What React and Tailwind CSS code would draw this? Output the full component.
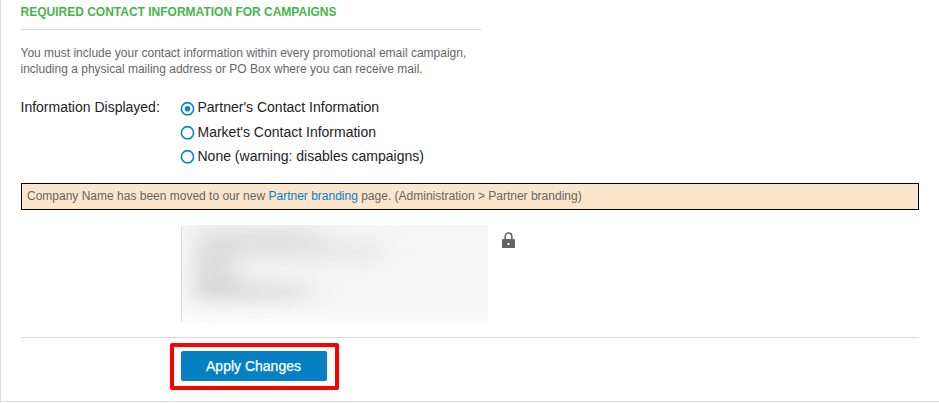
import React from "react";

const options = [
  { label: "Partner's Contact Information", checked: true, row: "h-[25px]", dot: "mt-[3px]" },
  { label: "Market's Contact Information", checked: false, row: "h-[24px]", dot: "mt-[2px]" },
  { label: "None (warning: disables campaigns)", checked: false, row: "h-[24px]", dot: "mt-[2px]" },
];

function Radio({ checked, offset }) {
  return (
    <svg className={`h-[14px] w-[14px] shrink-0 overflow-visible ${offset}`} viewBox="0 0 14 14" fill="none">
      <circle cx="6.5" cy="6.8" r="6.1" stroke="#0d86c8" strokeWidth="1.7" />
      {checked && <circle cx="6.5" cy="6.8" r="2.8" fill="#0d86c8" />}
    </svg>
  );
}

function LockIcon() {
  return (
    <svg className="mt-[7px] ml-[14px] h-[16px] w-[13px]" viewBox="0 0 13 16" fill="none">
      <path d="M3.2 8V4.3a3.3 3.3 0 0 1 6.6 0V8" stroke="#636363" strokeWidth="1.6" />
      <rect x="0" y="7" width="13" height="9" rx="0.8" fill="#636363" />
      <rect x="5.5" y="11" width="2" height="2" fill="#fff" />
    </svg>
  );
}

export default function App() {
  return (
    <div className="h-[403px] w-[939px] overflow-hidden bg-white font-['Liberation_Sans',Arial,sans-serif]">
      <main className="h-[402px] border-b border-l border-[#d9d9d9] pr-[20px] pl-[20px]">
        <header className="h-[30px] w-[460px] border-b border-[#d9d9d9] pt-[4px]">
          <h1 className="-ml-[0.5px] text-[12px] leading-[16px] font-bold whitespace-nowrap text-[#46b549]">REQUIRED CONTACT INFORMATION FOR CAMPAIGNS</h1>
        </header>
        <p className="mt-[15px] -ml-[0.5px] text-[12px] leading-[16px] whitespace-nowrap text-[#666]">
          You must include your contact information within every promotional email campaign,
          <br />
          including a physical mailing address or PO Box where you can receive mail.
        </p>
        <section className="mt-[22px] -ml-[0.5px] flex h-[84px] text-[14px] leading-[16px] text-[#222]">
          <div className="w-[160px] whitespace-nowrap">Information Displayed:</div>
          <div>
            {options.map((o) => (
              <label key={o.label} className={`flex items-start gap-[3px] whitespace-nowrap ${o.row}`}>
                <Radio checked={o.checked} offset={o.dot} />
                <span>{o.label}</span>
              </label>
            ))}
          </div>
        </section>
        <div className="h-[27px] border border-black bg-[#fce5cd] pt-[4px] pl-[5px] text-[12px] leading-[16px] whitespace-nowrap text-[#666]">
          Company Name has been moved to our new <a className="text-[#0680c3]">Partner branding</a> page. (Administration &gt; Partner branding)
        </div>
        <section className="mt-[15px] flex h-[98px] pl-[160px]">
          <div className="h-[98px] w-[307px] overflow-hidden rounded-l-[3px] border-l border-[#dadada] bg-[#f6f6f6]">
            <svg className="h-[98px] w-[306px]" viewBox="0 0 306 98">
              <defs>
                <filter id="soft" filterUnits="userSpaceOnUse" x="-80" y="-80" width="470" height="260" colorInterpolationFilters="sRGB">
                  <feGaussianBlur stdDeviation="14 10" />
                </filter>
              </defs>
              <g filter="url(#soft)">
                <rect x="-60" y="91" width="426" height="60" fill="#fff" opacity=".7" />
                <rect x="-60" y="-20" width="64" height="140" fill="#fff" opacity=".5" />
                <g fill="#999">
                  <rect x="14" y="2" width="124" height="18" opacity=".23" />
                  <rect x="20" y="18" width="180" height="16" opacity=".2" />
                  <rect x="12" y="24" width="38" height="38" opacity=".28" />
                  <rect x="14" y="58" width="114" height="17" opacity=".26" />
                  <rect x="14" y="54" width="56" height="18" opacity=".14" />
                </g>
              </g>
            </svg>
          </div>
          <LockIcon />
        </section>
        <footer className="mt-[14px] border-t border-[#d9d9d9] pt-[5px] pl-[149px]">
          <div className="h-[47px] w-[169px] rounded-[2px] border-4 border-[#ff0000] pt-[4px] pl-[7px]">
            <button className="block h-[30px] w-[146px] rounded-[2px] bg-[#067fc3] pr-[1px] text-[14px] leading-[30px] font-normal text-white [-webkit-text-stroke:0.25px_white]">Apply Changes</button>
          </div>
        </footer>
      </main>
    </div>
  );
}
